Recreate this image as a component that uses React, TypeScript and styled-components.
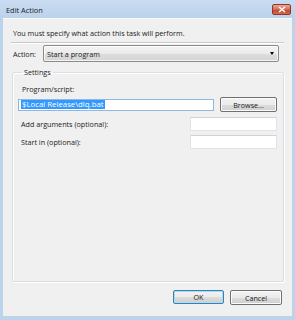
import React from "react";
import styled, { createGlobalStyle } from "styled-components";

const GlobalStyle = createGlobalStyle`
  html, body {
    margin: 0;
    padding: 0;
    background: #bcd3ec;
  }
  * {
    box-sizing: border-box;
  }
`;

const Window = styled.div`
  width: 295px;
  height: 320px;
  display: flex;
  flex-direction: column;
  background: #bcd3ec;
  font-family: "Segoe UI", "Open Sans", "Noto Sans", sans-serif;
  font-size: 7.2px;
  color: #1a1a1a;
`;

const TitleBar = styled.div`
  height: 18px;
  flex: none;
  display: flex;
  align-items: flex-start;
  justify-content: space-between;
  padding: 0 4px 0 6px;
  background: linear-gradient(to bottom, #c9dcf1 0%, #bcd3ec 100%);
`;

const Title = styled.span`
  line-height: 20px;
  font-size: 7.4px;
  color: #1a1a1a;
`;

const CloseButton = styled.div`
  margin-top: 4px;
  width: 19px;
  height: 11px;
  border: 1px solid #8a3a2c;
  border-radius: 2px;
  background: linear-gradient(to bottom, #e9a99a 0%, #d8694f 50%, #c7432a 55%, #d66a4c 100%);
  display: flex;
  align-items: center;
  justify-content: center;
`;

const Client = styled.div`
  flex: 1;
  margin: 0 3px 4px 3px;
  background: #f0f0f0;
  border-top: 1px solid #fbfbfb;
  display: flex;
  flex-direction: column;
  padding: 0 8px 0 8px;
`;

const Intro = styled.div`
  padding: 8px 0 0 2px;
  height: 23px;
  line-height: 12px;
`;

const Separator = styled.div`
  height: 1px;
  background: #c8c8c8;
  border-bottom: 1px solid #ffffff;
  box-sizing: content-box;
`;

const ActionRow = styled.div`
  display: flex;
  align-items: center;
  margin-top: 1px;
  padding-left: 2px;
  height: 17px;
`;

const ActionLabel = styled.span`
  width: 30px;
`;

const Select = styled.div`
  width: 236px;
  height: 17px;
  border: 1px solid #8b8b8b;
  border-radius: 2px;
  background: linear-gradient(to bottom, #f4f4f4 0%, #ebebeb 50%, #dddddd 51%, #d5d5d5 100%);
  display: flex;
  align-items: center;
  justify-content: space-between;
  padding: 0 4px 0 3px;
  box-shadow: inset 0 0 0 1px rgba(255, 255, 255, 0.7);
`;

const Arrow = styled.span`
  width: 0;
  height: 0;
  border-left: 2.5px solid transparent;
  border-right: 2.5px solid transparent;
  border-top: 3px solid #000;
`;

const Group = styled.fieldset`
  margin: 4px 0 0 1px;
  padding: 0 0 0 8px;
  width: 272px;
  height: 216px;
  border: 1px solid #d5dfe5;
  border-radius: 2px;
  box-shadow: inset 1px 1px 0 #ffffff, 1px 1px 0 #ffffff;
  display: flex;
  flex-direction: column;
`;

const Legend = styled.legend`
  padding: 0 2px;
  margin-left: 1px;
  line-height: 12px;
`;

const FieldLabel = styled.div<{ $top: number }>`
  padding-left: 1px;
  line-height: 12px;
  margin-top: ${(p) => p.$top}px;
`;

const Row = styled.div<{ $top: number }>`
  display: flex;
  align-items: center;
  justify-content: space-between;
  margin-top: ${(p) => p.$top}px;
  padding-right: 6px;
`;

const ProgramInput = styled.div`
  width: 196px;
  height: 12px;
  margin-left: -3px;
  border: 1px solid #8fb7e0;
  background: #fff;
  display: flex;
  align-items: center;
  padding-left: 2px;
`;

const Selected = styled.span`
  background: #3399ff;
  color: #fff;
  font-size: 7.8px;
  line-height: 9px;
  padding: 0 1px;
`;

const TextField = styled.div`
  width: 87px;
  height: 14px;
  background: #fff;
  border: 1px solid #dfe3e8;
  border-top-color: #cfd3d8;
`;

const Button = styled.div<{ $default?: boolean; $w: number }>`
  width: ${(p) => p.$w}px;
  height: ${(p) => (p.$default ? 14 : 15)}px;
  border: 1px solid ${(p) => (p.$default ? "#3c7fb1" : "#707070")};
  border-radius: 2px;
  background: linear-gradient(to bottom, #f2f2f2 0%, #ebebeb 50%, #dddddd 51%, #cfcfcf 100%);
  box-shadow: inset 0 0 0 1px ${(p) => (p.$default ? "#a8dbf5" : "#fbfbfb")};
  display: flex;
  align-items: center;
  justify-content: center;
  color: #1a1a1a;
`;

const Footer = styled.div`
  display: flex;
  justify-content: flex-end;
  gap: 6px;
  margin-top: 8px;
  padding-right: 2px;
`;

export default function App() {
  return (
    <>
      <GlobalStyle />
      <Window>
        <TitleBar>
          <Title>Edit Action</Title>
          <CloseButton>
            <svg width="8" height="7" viewBox="0 0 8 7">
              <path d="M1 1 L7 6 M7 1 L1 6" stroke="#ffffff" strokeWidth="1.6" />
            </svg>
          </CloseButton>
        </TitleBar>
        <Client>
          <Intro>You must specify what action this task will perform.</Intro>
          <Separator />
          <ActionRow>
            <ActionLabel>Action:</ActionLabel>
            <Select>
              <span>Start a program</span>
              <Arrow />
            </Select>
          </ActionRow>
          <Group>
            <Legend>Settings</Legend>
            <FieldLabel $top={5}>Program/script:</FieldLabel>
            <Row $top={2}>
              <ProgramInput>
                <Selected>$Local Release\dlq.bat</Selected>
              </ProgramInput>
              <Button $w={57}>Browse...</Button>
            </Row>
            <Row $top={5}>
              <span>Add arguments (optional):</span>
              <TextField />
            </Row>
            <Row $top={4}>
              <span>Start in (optional):</span>
              <TextField />
            </Row>
          </Group>
          <Footer>
            <Button $default $w={51}>OK</Button>
            <Button $w={52}>Cancel</Button>
          </Footer>
        </Client>
      </Window>
    </>
  );
}
